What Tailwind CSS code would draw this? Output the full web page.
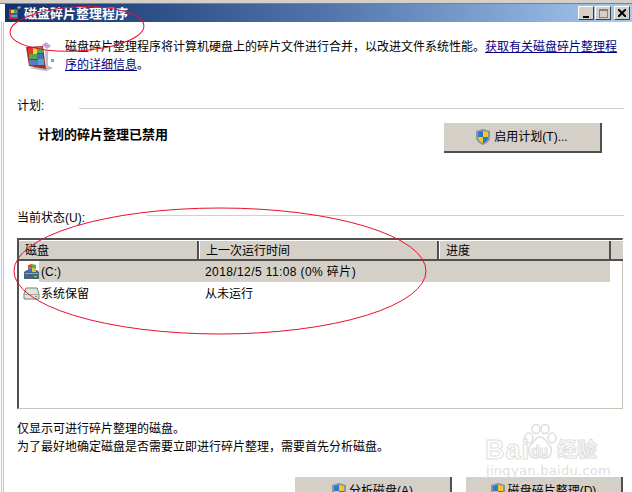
<!DOCTYPE html>
<html lang="zh-CN">
<head>
<meta charset="UTF-8">
<title>磁盘碎片整理程序</title>
<script src="https://cdn.jsdelivr.net/npm/@tailwindcss/browser@4"></script>
</head>
<body class="bg-white">
<div class="relative w-[632px] h-[492px] overflow-hidden bg-white text-[12px] leading-[17px] text-black font-['Liberation_Sans','Noto_Sans_CJK_SC',sans-serif]">

  <!-- top strip + title bar -->
  <div class="h-[4px] bg-[#d4d0c8] border-b border-[#808080]"></div>
  <div class="h-[18px] ml-[5px] flex items-center bg-gradient-to-r from-[#12306e] via-[#4f73a9] to-[#a6caf0]">
    <svg class="ml-[2px] w-[16px] h-[16px] shrink-0" viewBox="0 0 16 16">
      <path d="M2 4h9v10H2z" fill="#c03030"/><path d="M4 5h3v3H4z" fill="#e8d040"/><path d="M7 5h3v3H7z" fill="#50a040"/><path d="M4 8h6v2H4z" fill="#3060c0"/><path d="M4 10h6v2H4z" fill="#60a0c0"/><path d="M10 2l3-1 1 2-3 1z" fill="#c090d0"/>
    </svg>
    <span class="ml-[1px] text-white font-bold text-[13px]">磁盘碎片整理程序</span>
    <div class="ml-auto mr-[2px] flex gap-[1px]">
      <div class="w-[16px] h-[14px] bg-[#d4d0c8] border border-t-white border-l-white border-r-[#404040] border-b-[#404040] flex items-end justify-center pb-[1px]"><div class="w-[6px] h-[2px] bg-black"></div></div>
      <div class="w-[16px] h-[14px] bg-[#d4d0c8] border border-t-white border-l-white border-r-[#404040] border-b-[#404040] flex items-center justify-center"><div class="w-[9px] h-[9px] border border-[#808080] border-t-2"></div></div>
      <div class="ml-[2px] w-[16px] h-[14px] bg-[#d4d0c8] border border-t-white border-l-white border-r-[#404040] border-b-[#404040] flex items-center justify-center">
        <svg class="w-[8px] h-[8px]" viewBox="0 0 8 8"><path d="M0 0l8 8M8 0L0 8" stroke="#000" stroke-width="2"/></svg>
      </div>
    </div>
  </div>

  <!-- window left frame -->
  <div class="absolute left-[1px] top-[22px] bottom-0 w-[3px] border-x border-[#c8c4bc]"></div>

  <!-- body -->
  <div class="pl-[17px] pr-[10px]">
    <!-- intro -->
    <div class="flex pt-[17px] h-[70px]">
      <svg class="ml-[7px] mt-[2px] w-[32px] h-[32px] shrink-0" viewBox="0 0 32 32">
        <path d="M5 27l17 3 7-3-7-3z" fill="#b8b4c0"/>
        <path d="M2 6l17-1 3 23-17-3z" fill="#a82828"/>
        <path d="M4 7h5v6H4z" fill="#e03828"/><path d="M9 7h4v6H9z" fill="#e8d850"/><path d="M13 6h5l1 6h-6z" fill="#58a848"/>
        <path d="M5 13h8v5H5z" fill="#58a848"/><path d="M13 13h6v5h-6z" fill="#3878b8"/>
        <path d="M5 19h9v5H5z" fill="#5878c8"/><path d="M14 18h6v6h-6z" fill="#50a8c8"/>
        <path d="M18 4l4-3 5 4-4 3z" fill="#c8a0d8"/>
        <path d="M27 18h3v3h-3z" fill="#40c0e0"/>
        <path d="M21 9l3 1v16l-2 2z" fill="#c0bcc8"/>
      </svg>
      <p class="ml-[9px] w-[553px] leading-[17.5px]">磁盘碎片整理程序将计算机硬盘上的碎片文件进行合并，以改进文件系统性能。<a class="text-[#000080] underline">获取有关磁盘碎片整理程序的详细信息</a>。</p>
    </div>

    <!-- schedule -->
    <div class="flex items-center h-[17px] mt-[5px]">
      <span class="w-[62px] shrink-0 pt-[1px]">计划:</span>
      <div class="mt-[5px] w-[545px] h-px bg-[#d4d0c8] shrink-0"></div>
    </div>
    <div class="flex items-start mt-[9px] h-[85px]">
      <span class="ml-[21px] mt-[3px] font-bold text-[13px]">计划的碎片整理已禁用</span>
      <button class="ml-auto mr-[20px] w-[158px] h-[30px] bg-[#d4d0c8] border-r-2 border-b-2 border-r-[#505050] border-b-[#505050] flex items-center justify-center gap-[4px]">
        <svg class="w-[14px] h-[16px]" viewBox="0 0 14 16"><path d="M7 0l7 2v6c0 4-3 6-7 8-4-2-7-4-7-8V2z" fill="#8a94a0"/><path d="M7 2v6H2V3z" fill="#2a78d0"/><path d="M7 2l5 1v5H7z" fill="#f4c820"/><path d="M2 8h5v6c-3-1-5-3-5-6z" fill="#f4c820"/><path d="M7 8h5c0 3-2 5-5 6z" fill="#2a78d0"/></svg>
        <span class="pt-[1px]">启用计划(T)...</span>
      </button>
    </div>

    <!-- status -->
    <div class="flex items-center h-[17px]">
      <span class="w-[130px] shrink-0 pt-[3px]">当前状态(U):</span>
      <div class="-mt-[2px] w-[477px] h-px bg-[#d4d0c8] shrink-0"></div>
    </div>

    <!-- list -->
    <div class="mt-[13px] w-[606px] h-[171px] border-t-2 border-l-2 border-[#505050] border-r border-b border-r-[#c8c4bc] border-b-[#c8c4bc]">
      <div class="flex h-[21px] bg-[#d4d0c8] border-b-2 border-[#505050] -mr-px border-t border-t-white">
        <div class="w-[180px] pl-[6px] pt-[2px] border-r-2 border-[#505050]">磁盘</div>
        <div class="w-[240px] pl-[6px] pt-[2px] border-l border-white border-r-2 border-r-[#505050]">上一次运行时间</div>
        <div class="w-[172px] pl-[6px] pt-[2px] border-l border-white border-r-2 border-r-[#505050]">进度</div>
      </div>
      <div class="flex h-[21px] items-center">
        <div class="w-[20px] pl-[4px] shrink-0">
          <svg class="w-[17px] h-[17px]" viewBox="0 0 17 17"><path d="M1 9l3-2h10l2 2v7H1z" fill="#4a6484"/><path d="M2 10h13v1H2z" fill="#8ea4c0"/><path d="M11 13h3v1h-3z" fill="#80e060"/><path d="M5 2l4-1v4l-4 1z" fill="#d85030"/><path d="M9 1l4 1v4L9 5z" fill="#60b040"/><path d="M5 6l4-1v4H5z" fill="#3070d0"/><path d="M9 5l4 1v3H9z" fill="#e8c030"/></svg>
        </div>
        <div class="flex flex-1 h-full items-center bg-[#d4d0c8] mr-[12px]">
          <div class="w-[160px] pl-[2px] pt-[1px]">(C:)</div>
          <div class="pl-[6px] pt-[1px] tracking-[0.4px]">2018/12/5 11:08 (0% 碎片)</div>
        </div>
      </div>
      <div class="flex h-[21px] items-center">
        <div class="w-[20px] pl-[4px] shrink-0">
          <svg class="w-[17px] h-[14px]" viewBox="0 0 17 14"><path d="M3 2h11l2 6v5H1V8z" fill="#e4e4de" stroke="#77817f"/><path d="M2 8h13v1H2z" fill="#9aa4a2"/><path d="M12 10h2v1h-2z" fill="#60b040"/></svg>
        </div>
        <div class="w-[160px] pl-[2px] pt-[3px]">系统保留</div>
        <div class="pl-[6px] pt-[3px]">从未运行</div>
      </div>
    </div>

    <!-- notes -->
    <p class="mt-[11px] leading-[18px]">仅显示可进行碎片整理的磁盘。<br>为了最好地确定磁盘是否需要立即进行碎片整理，需要首先分析磁盘。</p>

    <!-- actions -->
    <div class="flex justify-end mt-[21px] mr-[-1px] gap-[14px]">
      <button class="w-[157px] h-[30px] bg-[#d4d0c8] border-r-2 border-r-[#505050] flex items-start justify-center gap-[3px] pt-[6px]">
        <svg class="w-[14px] h-[16px]" viewBox="0 0 14 16"><path d="M7 0l7 2v6c0 4-3 6-7 8-4-2-7-4-7-8V2z" fill="#8a94a0"/><path d="M7 2v6H2V3z" fill="#2a78d0"/><path d="M7 2l5 1v5H7z" fill="#f4c820"/><path d="M2 8h5v6c-3-1-5-3-5-6z" fill="#f4c820"/><path d="M7 8h5c0 3-2 5-5 6z" fill="#2a78d0"/></svg>
        <span>分析磁盘(A)</span>
      </button>
      <button class="w-[157px] h-[30px] bg-[#d4d0c8] border-r-2 border-r-[#505050] flex items-start justify-center gap-[3px] pt-[6px]">
        <svg class="w-[14px] h-[16px]" viewBox="0 0 14 16"><path d="M7 0l7 2v6c0 4-3 6-7 8-4-2-7-4-7-8V2z" fill="#8a94a0"/><path d="M7 2v6H2V3z" fill="#2a78d0"/><path d="M7 2l5 1v5H7z" fill="#f4c820"/><path d="M2 8h5v6c-3-1-5-3-5-6z" fill="#f4c820"/><path d="M7 8h5c0 3-2 5-5 6z" fill="#2a78d0"/></svg>
        <span>磁盘碎片整理(D)</span>
      </button>
    </div>
  </div>

  <!-- baidu watermark -->
  <div class="absolute left-[484px] top-[424px] w-[120px] h-[56px] text-white [-webkit-text-stroke:1px_#dedede]">
    <svg class="absolute left-[39px] top-[0px] w-[34px] h-[36px]" viewBox="0 0 34 36" fill="none" stroke="#dedede" stroke-width="1.5"><ellipse cx="6" cy="14" rx="4" ry="5"/><ellipse cx="13" cy="5" rx="4" ry="4.5"/><ellipse cx="22" cy="5" rx="4" ry="4.5"/><ellipse cx="29" cy="14" rx="4" ry="5"/><path d="M17 13c5 0 6 5 10 9 3 4 1 12-5 12-2 0-3-1-5-1s-3 1-5 1c-6 0-8-8-5-12 4-4 5-9 10-9z"/></svg>
    <span class="absolute left-[1px] top-[13px] text-[27px] leading-[27px] font-bold tracking-[1px]">Bai</span>
    <span class="absolute left-[47px] top-[19px] text-[14px] leading-[16px] font-bold">du</span>
    <span class="absolute left-[73px] top-[15px] text-[20px] leading-[22px] font-bold">经验</span>
    <span class="absolute left-[2px] top-[40px] text-[13px] leading-[14px] tracking-[0.3px] font-['DejaVu_Sans',sans-serif] text-[#dedede] [-webkit-text-stroke:0]">jingyan.baidu.com</span>
  </div>

  <!-- red annotation ellipses -->
  <svg class="absolute left-0 top-0 w-[632px] h-[492px] pointer-events-none" viewBox="0 0 632 492" fill="none" stroke="#e8112d" stroke-width="1">
    <ellipse cx="77" cy="29" rx="67" ry="22" transform="rotate(-3 77 29)"/>
    <ellipse cx="220" cy="271" rx="206" ry="63"/>
  </svg>
</div>
</body>
</html>
